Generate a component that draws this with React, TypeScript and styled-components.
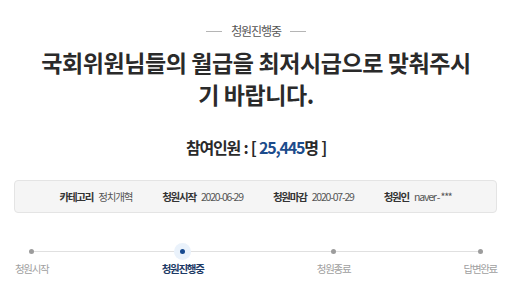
import React from 'react'
import styled, {createGlobalStyle} from 'styled-components'

const GlobalStyle = createGlobalStyle`
  html, body {
    margin: 0;
    padding: 0;
    background: #ffffff;
  }
  body {
    font-family: 'Noto Sans CJK KR', 'Noto Sans', sans-serif;
    color: #333;
  }
`

const Page = styled.div`
  width: 512px;
  height: 292px;
  padding-top: 23px;
  box-sizing: border-box;
  overflow: hidden;
  display: flex;
  flex-direction: column;
  align-items: center;
`

const Status = styled.div`
  display: flex;
  align-items: center;
  gap: 9px;
  font-size: 12px;
  line-height: 16px;
  letter-spacing: -1.1px;
  color: #555;
`

const Dash = styled.span`
  width: 16px;
  height: 1px;
  background: #b5b5b5;
`

const Title = styled.h1`
  margin: 7px 0 0;
  font-size: 23px;
  line-height: 32px;
  font-weight: 700;
  letter-spacing: -0.4px;
  color: #2a2a2a;
  text-align: center;
`

const Count = styled.div`
  margin-top: 25px;
  font-size: 16px;
  line-height: 24px;
  font-weight: 700;
  letter-spacing: -1.2px;
  word-spacing: 1px;
  color: #2a2a2a;
`

const Num = styled.span`
  color: #1c4c8c;
`

const InfoBox = styled.div`
  align-self: stretch;
  margin: 21px 15px 0 14px;
  height: 33px;
  box-sizing: border-box;
  background: #f5f5f5;
  border: 1px solid #e4e4e4;
  border-radius: 4px;
  display: flex;
  justify-content: center;
  align-items: center;
  gap: 30px;
  font-size: 10.5px;
  letter-spacing: -1.2px;
`

const InfoItem = styled.div`
  display: flex;
  align-items: center;
  gap: 5px;
`

const InfoLabel = styled.span`
  font-weight: 700;
  color: #333;
`

const InfoValue = styled.span`
  color: #555;
`

const Timeline = styled.div`
  align-self: stretch;
  margin: 30px 15px 0 15px;
  position: relative;
  display: flex;
  justify-content: space-between;
`

const Rail = styled.div`
  position: absolute;
  left: 15px;
  right: 16px;
  top: 8px;
  height: 1px;
  background: #e0e0e0;
`

const Step = styled.div`
  position: relative;
  display: flex;
  flex-direction: column;
  align-items: center;
`

const DotWrap = styled.div<{$active?: boolean}>`
  width: 17px;
  height: 17px;
  border-radius: 50%;
  background: ${p => (p.$active ? '#eaf2fb' : 'transparent')};
  display: flex;
  align-items: center;
  justify-content: center;
`

const Dot = styled.span<{$active?: boolean}>`
  width: 5px;
  height: 5px;
  border-radius: 50%;
  background: ${p => (p.$active ? '#17498f' : '#9c9c9c')};
`

const StepLabel = styled.span<{$active?: boolean}>`
  margin-top: 1px;
  font-size: 10.5px;
  line-height: 16px;
  letter-spacing: -1.3px;
  font-weight: ${p => (p.$active ? 700 : 400)};
  color: ${p => (p.$active ? '#1d3a66' : '#a0a0a0')};
`

const info = [
  {label: '카테고리', value: '정치개혁'},
  {label: '청원시작', value: '2020-06-29'},
  {label: '청원마감', value: '2020-07-29'},
  {label: '청원인', value: 'naver - ***'},
]

const steps = ['청원시작', '청원진행중', '청원종료', '답변완료']
const current = 1

export default function App() {
  return (
    <Page>
      <GlobalStyle />
      <Status>
        <Dash />
        청원진행중
        <Dash />
      </Status>
      <Title>
        국회위원님들의 월급을 최저시급으로 맞춰주시
        <br />
        기 바랍니다.
      </Title>
      <Count>
        참여인원 : [ <Num>25,445</Num>명 ]
      </Count>
      <InfoBox>
        {info.map(i => (
          <InfoItem key={i.label}>
            <InfoLabel>{i.label}</InfoLabel>
            <InfoValue>{i.value}</InfoValue>
          </InfoItem>
        ))}
      </InfoBox>
      <Timeline>
        <Rail />
        {steps.map((s, idx) => (
          <Step key={s}>
            <DotWrap $active={idx === current}>
              <Dot $active={idx === current} />
            </DotWrap>
            <StepLabel $active={idx === current}>{s}</StepLabel>
          </Step>
        ))}
      </Timeline>
    </Page>
  )
}
